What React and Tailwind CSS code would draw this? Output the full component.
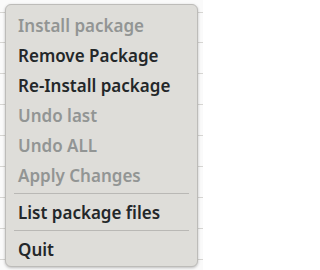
import React from "react";

const items = [
  { label: "Install package", disabled: true },
  { label: "Remove Package" },
  { label: "Re-Install package" },
  { label: "Undo last", disabled: true },
  { label: "Undo ALL", disabled: true },
  { label: "Apply Changes", disabled: true },
  { sep: true },
  { label: "List package files" },
  { sep: true },
  { label: "Quit" },
];

const rows = [13, 30, 31, 31, 31, 31, 31, 31, 31, 30];

const App = () => {
  return (
    <div className="relative w-[203px] h-[270px] overflow-hidden bg-[#fafafa] font-['Noto_Sans',sans-serif]">
      {/* table rows behind the menu */}
      <div className="flex flex-col">
        {rows.map((h, i) => (
          <div
            key={i}
            className="border-b border-[#d6d5d2] shrink-0"
            style={{ height: h }}
          />
        ))}
      </div>

      <div className="absolute left-[5px] top-[4px] w-[193px] rounded-[6px] border border-[#bdbcb9] bg-[#deddd9] pt-[5px] pb-[2px] shadow-[0_1px_3px_rgba(0,0,0,0.25)]">
        {items.map((item, i) =>
          item.sep ? (
            <div key={i} className="mx-[8px] my-[3px] h-px bg-[#b9b8b5]" />
          ) : (
            <div
              key={i}
              className={
                "h-[30px] flex items-center pl-[12px] text-[17px] font-semibold leading-none " +
                (item.disabled ? "text-[#929594]" : "text-[#232729]")
              }
            >
              {item.label}
            </div>
          )
        )}
      </div>
    </div>
  );
};

export default App;
